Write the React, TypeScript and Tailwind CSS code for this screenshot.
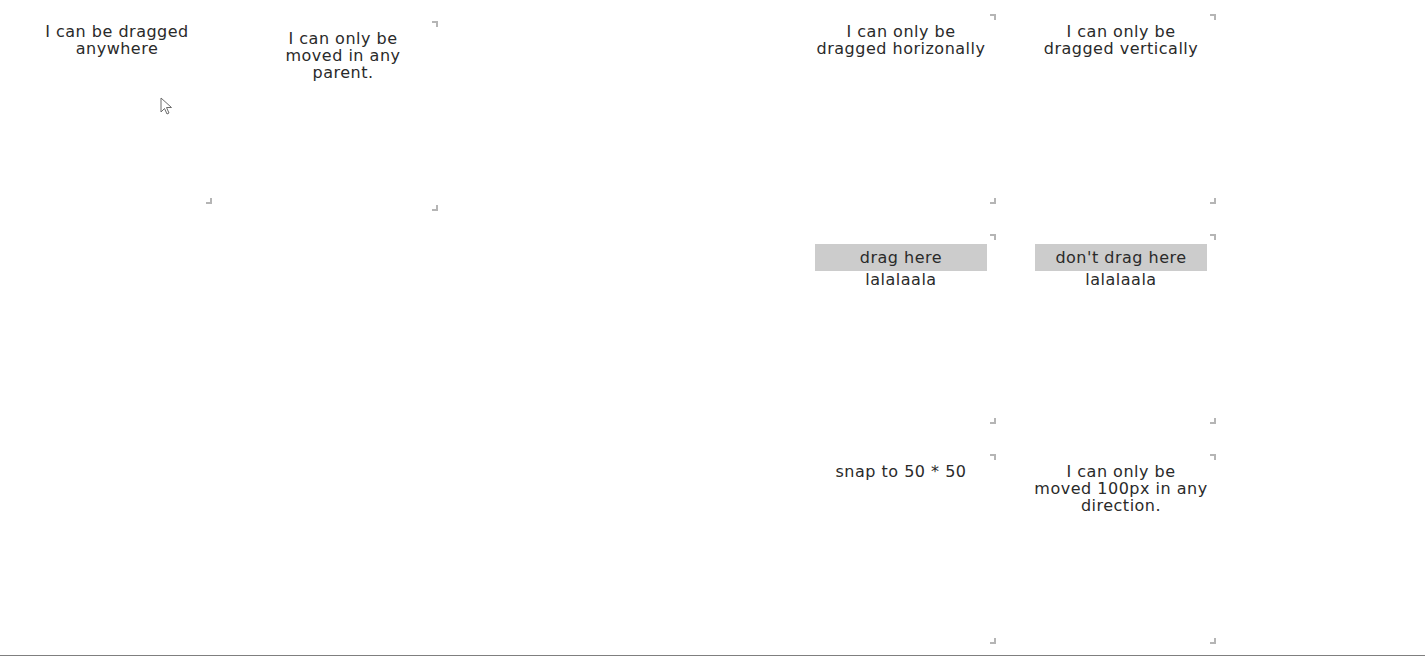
import React from "react";

function Box({
  children,
  className,
  showTop = true,
}: {
  children: React.ReactNode;
  className: string;
  showTop?: boolean;
}) {
  return (
    <div className={"relative w-[190px] h-[190px] shrink-0 box-border p-[10px] text-center " + className}>
      {children}
      {showTop && (
        <span className="absolute right-0 top-0 w-[6px] h-[6px] border-t-2 border-r-2 border-[#b5b5b5]" />
      )}
      <span className="absolute right-0 bottom-0 w-[6px] h-[6px] border-b-2 border-r-2 border-[#b5b5b5]" />
    </div>
  );
}

function Cursor() {
  return (
    <svg
      className="absolute left-[160px] top-[97px]"
      width="14"
      height="20"
      viewBox="0 0 14 20"
    >
      <path
        d="M1 1 L1 15 L4.5 11.5 L7 17 L9 16 L6.5 10.5 L11.5 10.5 Z"
        fill="#ffffff"
        stroke="#6b6b6b"
        strokeWidth="1"
        strokeLinejoin="round"
      />
    </svg>
  );
}

export default function App() {
  return (
    <div className="relative h-[656px] box-border overflow-hidden border-b border-[#7f7f7f] bg-white flex items-start font-['DejaVu_Sans',sans-serif] text-[16px] leading-[17px] tracking-[0.5px] text-[#2a2a2a]">
      <Box className="ml-[22px] mt-[14px]" showTop={false}>
        <div className="-mt-[1px] -mx-[6px]">
          I can be dragged
          <br />
          anywhere
        </div>
      </Box>
      <Box className="ml-[36px] mt-[21px]">
        <div className="-mt-[1px]">
          I can only be
          <br />
          moved in any
          <br />
          parent.
        </div>
      </Box>
      <div className="ml-[368px] mt-[14px] grid grid-cols-[190px_190px] gap-[30px]">
        <Box className="">
          <div className="-mt-[1px] -mx-[6px]">
            I can only be
            <br />
            dragged horizonally
          </div>
        </Box>
        <Box className="">
          <div className="-mt-[1px] -mx-[6px]">
            I can only be
            <br />
            dragged vertically
          </div>
        </Box>
        <Box className="">
          <div className="-mx-[1px] bg-[#cccccc] py-[5px]">drag here</div>
          <div>lalalaala</div>
        </Box>
        <Box className="">
          <div className="-mx-[1px] bg-[#cccccc] py-[5px]">don&apos;t drag here</div>
          <div>lalalaala</div>
        </Box>
        <Box className="">
          <div className="-mt-[1px]">snap to 50 * 50</div>
        </Box>
        <Box className="">
          <div className="-mt-[1px] -mx-[6px]">
            I can only be
            <br />
            moved 100px in any
            <br />
            direction.
          </div>
        </Box>
      </div>
      <Cursor />
    </div>
  );
}
